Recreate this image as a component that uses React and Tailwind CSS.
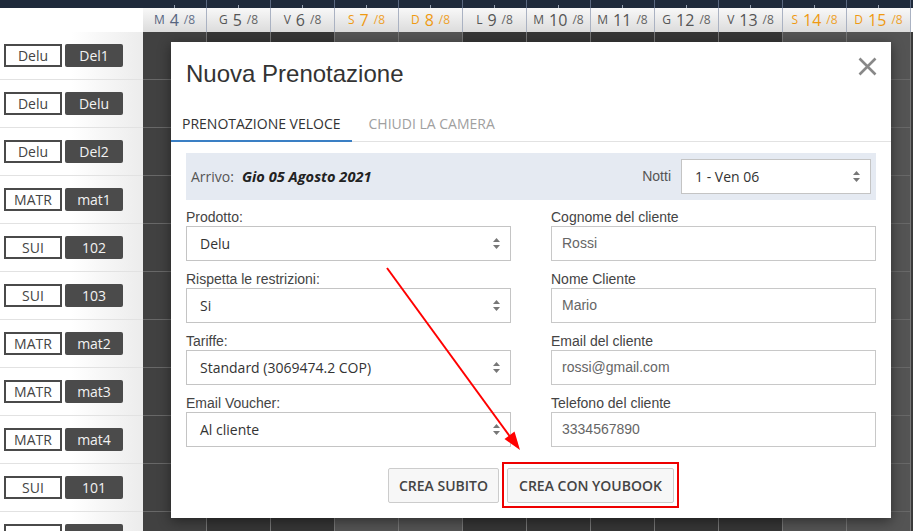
import React from 'react';

const days = [
    { d: 'M', n: 4, today: true },
    { d: 'G', n: 5 },
    { d: 'V', n: 6 },
    { d: 'S', n: 7, we: true },
    { d: 'D', n: 8, we: true },
    { d: 'L', n: 9 },
    { d: 'M', n: 10 },
    { d: 'M', n: 11 },
    { d: 'G', n: 12 },
    { d: 'V', n: 13 },
    { d: 'S', n: 14, we: true },
    { d: 'D', n: 15, we: true },
];

const rooms = [
    ['Delu', 'Del1'],
    ['Delu', 'Delu'],
    ['Delu', 'Del2'],
    ['MATR', 'mat1'],
    ['SUI', '102'],
    ['SUI', '103'],
    ['MATR', 'mat2'],
    ['MATR', 'mat3'],
    ['MATR', 'mat4'],
    ['SUI', '101'],
    ['MATR', 'mat5'],
];

const open = { fontFamily: '"Open Sans", "Liberation Sans", sans-serif' };
const arial = { fontFamily: '"Liberation Sans", Arial, sans-serif' };

// little up/down arrows on the selects
const SelectArrows = () => (
    <svg width="7" height="11" viewBox="0 0 7 11" className="shrink-0">
        <path d="M3.5 0 L7 4 L0 4 Z" fill="#777" />
        <path d="M3.5 11 L7 7 L0 7 Z" fill="#777" />
    </svg>
);

const Select = ({ value }) => (
    <div className="h-[35px] border border-[#c4c4c4] bg-white flex items-center justify-between pl-[13px] pr-[10px] text-[14px] text-[#333]" style={open}>
        <span>{value}</span>
        <SelectArrows />
    </div>
);

const Input = ({ value }) => (
    <div className="h-[35px] border border-[#c8c8c8] bg-white flex items-center pl-[10px] text-[14px] text-[#666]" style={arial}>
        {value}
    </div>
);

const Field = ({ label, children }) => (
    <div className="mb-[9px]">
        <div className="text-[14px] leading-[18px] text-[#444]" style={arial}>{label}</div>
        {children}
    </div>
);

const App = () => {
    return (
        <div className="w-[913px] h-[531px] relative overflow-hidden bg-white" style={open}>
            {/* top navy bar */}
            <div className="h-[8px] bg-[#1f2a3b] flex">
                <div className="w-[143px]" />
                {days.map((c, i) => (
                    <div key={i} className="w-[64px] border-r border-[#5b6880] flex justify-center items-end">
                        <div className="w-px h-[3px] bg-[#9aa4b4]" />
                    </div>
                ))}
            </div>

            {/* day header */}
            <div className="h-[24px] flex">
                <div className="w-[143px] bg-white" />
                {days.map((c, i) => (
                    <div
                        key={i}
                        className={
                            'w-[64px] border-r border-[#aab2c2] bg-gradient-to-b from-[#f8f8f8] to-[#dcdcdc] flex items-center justify-center gap-[5px] ' +
                            (c.we ? 'text-[#ef9a12]' : c.today ? 'text-[#56647f]' : 'text-[#555]')
                        }
                    >
                        <span className="text-[12px]">{c.d}</span>
                        <span className="text-[16px] leading-none">{c.n}</span>
                        <span className="text-[12px] opacity-90">/8</span>
                    </div>
                ))}
            </div>

            {/* body: rooms + planner grid */}
            <div className="flex">
                <div className="w-[143px] bg-gradient-to-r from-white via-white to-[#ececec]">
                    {rooms.map((r, i) => (
                        <div key={i} className="h-[48px] border-b border-[#e2e2e2] flex items-center pl-[4px] gap-[3px]">
                            <div className="w-[58px] h-[23px] border-2 border-[#4a4a4a] flex items-center justify-center text-[14px] text-[#444]">
                                {r[0]}
                            </div>
                            <div className="w-[58px] h-[23px] rounded-[2px] bg-[#4b4b4b] flex items-center justify-center text-[14px] text-[#f2f2f2]">
                                {r[1]}
                            </div>
                        </div>
                    ))}
                </div>
                <div className="flex flex-1 bg-[#3a3a3a]">
                    {days.map((c, i) => (
                        <div
                            key={i}
                            className={
                                'w-[64px] border-r border-[#777] ' +
                                (c.we ? 'bg-[#545454]' : c.today ? 'bg-[#414141]' : 'bg-[#363636]')
                            }
                        >
                            {rooms.map((r, j) => (
                                <div key={j} className="h-[48px] border-b border-[#686868]" />
                            ))}
                        </div>
                    ))}
                </div>
            </div>

            {/* modal */}
            <div className="absolute left-[171px] top-[42px] w-[720px] bg-white shadow-[0_3px_12px_rgba(0,0,0,0.45)]">
                <div className="flex justify-between items-start pl-[15px] pr-[14px] pt-[15px]">
                    <h2 className="text-[24px] leading-[33px] text-[#333]" style={arial}>Nuova Prenotazione</h2>
                    <svg width="19" height="19" viewBox="0 0 19 19">
                        <path d="M1.5 1.5 L17.5 17.5 M17.5 1.5 L1.5 17.5" stroke="#888" strokeWidth="2.6" />
                    </svg>
                </div>

                <div className="mt-[16px] flex border-b border-[#e2e2e2] text-[14px]">
                    <div className="px-[11px] pt-[8px] pb-[6px] leading-[20px] border-b-2 border-[#3a7fc4] -mb-px text-[#333]">
                        PRENOTAZIONE VELOCE
                    </div>
                    <div className="ml-[6px] px-[11px] pt-[8px] pb-[6px] leading-[20px] text-[#a0a0a0]">
                        CHIUDI LA CAMERA
                    </div>
                </div>

                <div className="px-[15px] pt-[11px] pb-[15px]">
                    <div className="h-[47px] bg-[#e5eaf2] flex items-center pl-[5px] pr-[5px]">
                        <span className="text-[14px] text-[#555]">Arrivo:</span>
                        <span className="ml-[8px] text-[14.6px] font-bold italic text-[#222]">Gio 05 Agosto 2021</span>
                        <span className="ml-auto mr-[10px] text-[14px] text-[#555]" style={arial}>Notti</span>
                        <div className="w-[190px]">
                            <Select value="1 - Ven 06" />
                        </div>
                    </div>

                    <div className="mt-[8px] grid grid-cols-2 gap-x-[40px]">
                        <div>
                            <Field label="Prodotto:"><Select value="Delu" /></Field>
                            <Field label="Rispetta le restrizioni:"><Select value="Si" /></Field>
                            <Field label="Tariffe:"><Select value="Standard (3069474.2 COP)" /></Field>
                            <Field label="Email Voucher:"><Select value="Al cliente" /></Field>
                        </div>
                        <div>
                            <Field label="Cognome del cliente"><Input value="Rossi" /></Field>
                            <Field label="Nome Cliente"><Input value="Mario" /></Field>
                            <Field label="Email del cliente"><Input value="rossi@gmail.com" /></Field>
                            <Field label="Telefono del cliente"><Input value="3334567890" /></Field>
                        </div>
                    </div>

                    <div className="mt-[12px] flex justify-center gap-[8px]">
                        <button className="w-[111px] h-[35px] bg-[#f7f7f7] border border-[#ccc] rounded-[2px] text-[14px] font-semibold text-[#444]">
                            CREA SUBITO
                        </button>
                        <button className="relative w-[167px] h-[35px] bg-[#f7f7f7] border border-[#ccc] rounded-[2px] text-[14px] font-semibold text-[#444]">
                            CREA CON YOUBOOK
                            <span className="absolute -left-[6px] -right-[6px] -top-[7px] -bottom-[6px] border-2 border-[#ee0000]" />
                        </button>
                    </div>
                </div>
            </div>

            {/* annotation arrow */}
            <svg className="absolute inset-0 pointer-events-none" width="913" height="531">
                <line x1="387" y1="268" x2="511" y2="438" stroke="#ff0000" strokeWidth="2" />
                <path d="M520 450 L514.5 431.5 L504.5 439 Z" fill="#ff0000" />
            </svg>
        </div>
    );
};

export default App;
